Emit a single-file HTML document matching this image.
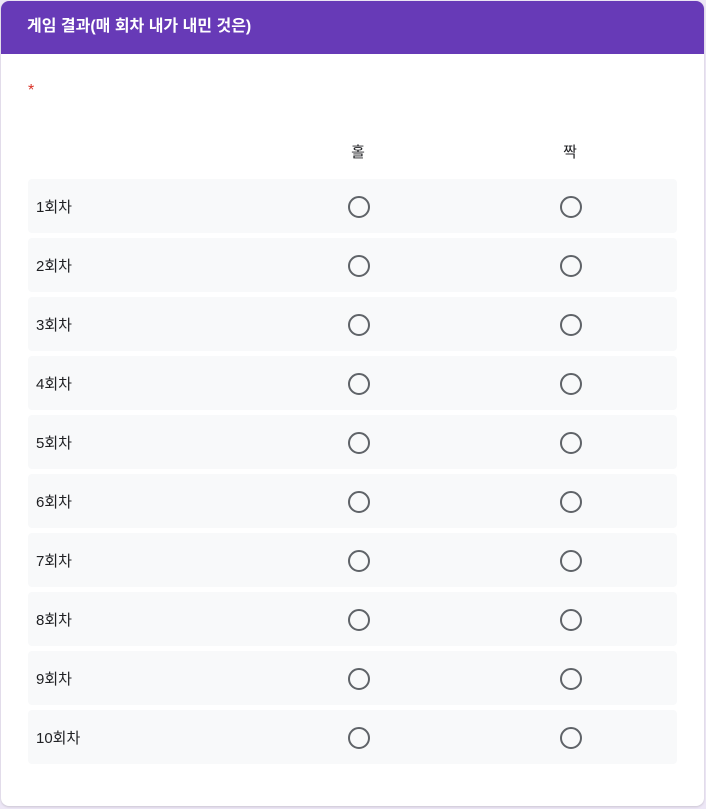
<!DOCTYPE html>
<html><head><meta charset="utf-8"><style>
body{margin:0;width:706px;height:809px;background:#ede7f6;font-family:"Liberation Sans","Noto Sans CJK KR",sans-serif;position:relative;overflow:hidden}
.card{position:absolute;left:1px;top:1px;width:703px;height:805px;background:#fff;border-radius:8px;overflow:hidden;box-shadow:0 1px 2px rgba(0,0,0,.15)}
.hd{height:53px;background:#673ab7;color:#fff;font-size:16px;font-weight:bold;line-height:52px;padding-left:26px;box-sizing:border-box}
.star{position:absolute;left:27px;top:81px;color:#d93025;font-size:16px}
.col{position:absolute;top:140px;font-size:15px;color:#202124;width:40px;text-align:center}
.row{position:absolute;left:27px;width:649px;height:54px;background:#f8f9fa;border-radius:4px}
.row span{position:absolute;left:8px;top:17px;font-size:15px;color:#202124}
.c{position:absolute;top:17px;width:18px;height:18px;border:2px solid #5f6368;border-radius:50%}
</style></head><body><div class="card">
<div class="hd">게임 결과(매 회차 내가 내민 것은)</div>
<div class="star">*</div>
<div class="col" style="left:337px">홀</div>
<div class="col" style="left:549px">짝</div>
<div class="row" style="top:178px"><span>1회차</span><i class="c" style="left:320px"></i><i class="c" style="left:532px"></i></div>
<div class="row" style="top:237px"><span>2회차</span><i class="c" style="left:320px"></i><i class="c" style="left:532px"></i></div>
<div class="row" style="top:296px"><span>3회차</span><i class="c" style="left:320px"></i><i class="c" style="left:532px"></i></div>
<div class="row" style="top:355px"><span>4회차</span><i class="c" style="left:320px"></i><i class="c" style="left:532px"></i></div>
<div class="row" style="top:414px"><span>5회차</span><i class="c" style="left:320px"></i><i class="c" style="left:532px"></i></div>
<div class="row" style="top:473px"><span>6회차</span><i class="c" style="left:320px"></i><i class="c" style="left:532px"></i></div>
<div class="row" style="top:532px"><span>7회차</span><i class="c" style="left:320px"></i><i class="c" style="left:532px"></i></div>
<div class="row" style="top:591px"><span>8회차</span><i class="c" style="left:320px"></i><i class="c" style="left:532px"></i></div>
<div class="row" style="top:650px"><span>9회차</span><i class="c" style="left:320px"></i><i class="c" style="left:532px"></i></div>
<div class="row" style="top:709px"><span>10회차</span><i class="c" style="left:320px"></i><i class="c" style="left:532px"></i></div>
</div></body></html>
